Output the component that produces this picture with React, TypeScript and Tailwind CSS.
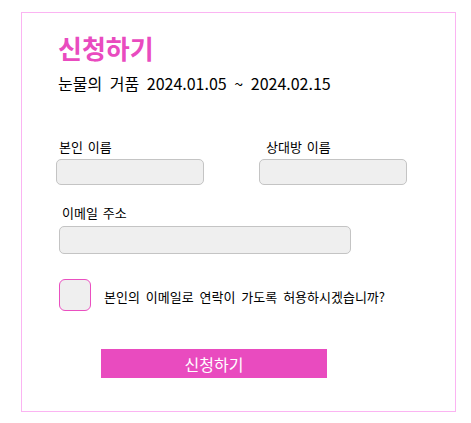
import React from "react";

export default function App() {
  const font = { fontFamily: '"Noto Sans CJK KR", "Noto Sans", sans-serif' };
  return (
    <div className="w-[471px] h-[423px] bg-white" style={font}>
      <div className="ml-[21px] pt-[12px]">
        <div className="w-[435px] h-[400px] border border-[#fbb4f2] pl-[34px] pt-[18px]">
          <h1 className="ml-[2px] text-[26px] leading-[34px] font-bold text-[#e94bbf]">신청하기</h1>
          <p className="ml-[2px] mt-[7px] text-[16px] leading-[22px] text-black [word-spacing:4px]">
            눈물의 거품 2024.01.05 ~ 2024.02.15
          </p>

          <div className="mt-[45px] flex">
            <div className="flex flex-col w-[148px]">
              <label className="ml-[3px] text-[13px] leading-[16px] text-black [word-spacing:2px]">본인 이름</label>
              <input className="mt-[4px] w-[148px] h-[26px] rounded-[5px] border border-[#c4c4c4] bg-[#efefef]" />
            </div>
            <div className="flex flex-col ml-[55px] w-[148px]">
              <label className="ml-[7px] text-[13px] leading-[16px] text-black [word-spacing:2px]">상대방 이름</label>
              <input className="mt-[4px] w-[148px] h-[26px] rounded-[5px] border border-[#c4c4c4] bg-[#efefef]" />
            </div>
          </div>

          <div className="mt-[20px] flex flex-col ml-[3px]">
            <label className="ml-[3px] text-[13px] leading-[16px] text-black [word-spacing:2px]">이메일 주소</label>
            <input className="mt-[5px] w-[292px] h-[28px] rounded-[5px] border border-[#c4c4c4] bg-[#efefef]" />
          </div>

          <div className="mt-[25px] flex items-start ml-[3px]">
            <div className="w-[32px] h-[32px] rounded-[6px] border border-[#ea4fc0] bg-[#efefef]" />
            <span className="ml-[13px] mt-[10px] text-[13px] leading-[16px] text-black [word-spacing:3px]">
              본인의 이메일로 연락이 가도록 허용하시겠습니까?
            </span>
          </div>

          <button className="mt-[38px] ml-[45px] w-[226px] h-[29px] bg-[#e94bbf] text-white text-[16px] leading-[20px]">
            신청하기
          </button>
        </div>
      </div>
    </div>
  );
}
